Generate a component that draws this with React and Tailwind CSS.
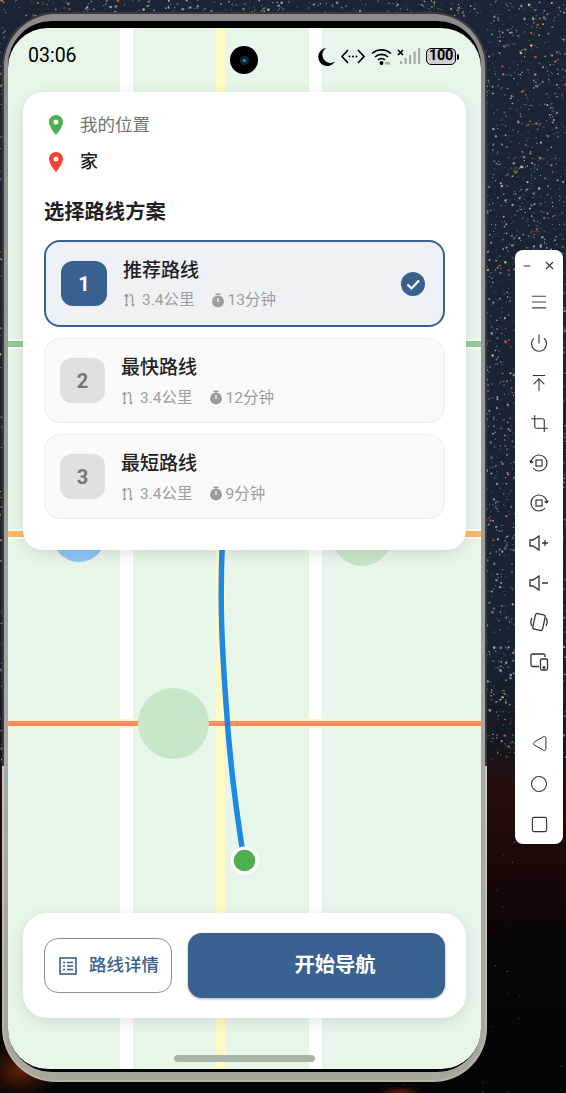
import React from 'react';
import {
  Minus, X, Menu, Power, ArrowUpToLine, Crop, Triangle, Circle, Square,
} from 'lucide-react';

const fontStack = { fontFamily: 'Roboto, "Noto Sans CJK SC", sans-serif' };

// starfield behind the phone, seeded so each run draws the same picture
function makeStars() {
  let seed = 1234;
  const rnd = () => {
    seed = (seed * 16807) % 2147483647;
    return seed / 2147483647;
  };
  const stars = [];
  for (let i = 0; i < 14000; i++) {
    const x = rnd() * 566;
    const y = rnd() * 760;
    const t = rnd();
    const r = 0.45 + rnd() * rnd() * 1.1;
    const o = 0.4 + rnd() * 0.6;
    // the phone and the toolbar cover these anyway
    if (x > 6 && x < 484 && y > 16) continue;
    if (x > 516 && x < 562 && y > 251) continue;
    const fill = t < 0.1 ? '#e0633a' : t < 0.45 ? '#d4c596' : t < 0.75 ? '#9fb2b5' : '#6b86a0';
    stars.push({ x, y, r, fill, o });
  }
  for (let i = 0; i < 120; i++) {
    const x = rnd() * 566;
    const y = 770 + rnd() * 323;
    stars.push({ x, y, r: 0.3 + rnd() * 0.4, fill: '#7d7f90', o: 0.35 + rnd() * 0.5 });
  }
  return stars;
}

const stars = makeStars();

function Backdrop() {
  return (
    <svg className="absolute inset-0" width="566" height="1093" viewBox="0 0 566 1093">
      <defs>
        <linearGradient id="sky" x1="0" y1="0" x2="0" y2="1">
          <stop offset="0" stopColor="#1b2535" />
          <stop offset="0.6" stopColor="#182232" />
          <stop offset="0.68" stopColor="#141820" />
          <stop offset="0.72" stopColor="#260e0b" />
          <stop offset="0.8" stopColor="#1a0807" />
          <stop offset="0.86" stopColor="#080505" />
          <stop offset="1" stopColor="#050505" />
        </linearGradient>
        <radialGradient id="glow">
          <stop offset="0" stopColor="#a83a0f" stopOpacity="0.55" />
          <stop offset="1" stopColor="#6e1c0c" stopOpacity="0" />
        </radialGradient>
      </defs>
      <rect width="566" height="1093" fill="url(#sky)" />
      <ellipse cx="20" cy="1070" rx="40" ry="30" fill="url(#glow)" />
      <ellipse cx="400" cy="1092" rx="24" ry="6" fill="url(#glow)" />
      {stars.map((s, i) => (
        <circle key={i} cx={s.x} cy={s.y} r={s.r} fill={s.fill} opacity={s.o} />
      ))}
    </svg>
  );
}

function MapLayer() {
  return (
    <svg className="absolute inset-0" width="473" height="1041" viewBox="8 28 473 1041">
      <rect x="8" y="28" width="473" height="1041" fill="#e8f5e9" />
      <rect x="120" y="28" width="13" height="1041" fill="#fff" />
      <rect x="309" y="28" width="13" height="1041" fill="#fff" />
      <rect x="216" y="28" width="9" height="1041" fill="#fff9c4" />
      {/* cross streets run on top of the vertical roads */}
      <rect x="8" y="339" width="473" height="10" fill="#fff" />
      <rect x="8" y="341" width="473" height="6" fill="#8fcd93" />
      <rect x="8" y="529" width="473" height="10" fill="#fff" />
      <rect x="8" y="531" width="473" height="6" fill="#ffb866" />
      <rect x="8" y="719" width="473" height="9" fill="#fff8c4" />
      <rect x="8" y="721" width="473" height="5" fill="#ff8a65" />
      <circle cx="79" cy="535" r="27" fill="#90c5f6" />
      <circle cx="362" cy="536" r="30" fill="#c8e6c9" />
      <circle cx="173.5" cy="723.5" r="35.5" fill="#c8e6c9" />
      <path d="M244 860 C 236 810, 230 765, 226.500 710 C 222 650, 219.500 600, 222.500 540" fill="none" stroke="#1e88e5" strokeWidth="5.500" />
      <circle cx="244.500" cy="860.500" r="14" fill="#fff" />
      <circle cx="244.500" cy="860.500" r="10.700" fill="#4caf50" />
    </svg>
  );
}

function StatusBar() {
  return (
    <div className="absolute left-0 right-0 top-0 h-[56px] text-black">
      <span className="absolute left-[20px] top-[16px] text-[19.5px] font-normal leading-[24px]">03:06</span>
      <div className="absolute left-[222px] top-[18px] flex h-[28px] w-[28px] items-center justify-center rounded-full bg-black">
        <div className="flex h-[9px] w-[9px] items-center justify-center rounded-full bg-[#10283c]">
          <div className="h-[3px] w-[3px] rounded-full bg-[#3f88b8]" />
        </div>
      </div>
      <div className="absolute left-[310px] top-[17px]">
        <svg width="110" height="24" viewBox="0 0 110 24">
          {/* moon */}
          <path d="M8 3 A9 9 0 1 0 17 16.500 A8 8 0 0 1 8 3Z" fill="#000" />
          {/* developer mode */}
          <path d="M30 5 L24 11.500 L30 18 M40 5 L46 11.500 L40 18" fill="none" stroke="#000" strokeWidth="1.700" />
          <circle cx="31.500" cy="11.500" r="1" /><circle cx="35" cy="11.500" r="1" /><circle cx="38.500" cy="11.500" r="1" />
          {/* wifi */}
          <path d="M54 8.500 A14 14 0 0 1 73 8.500 M57 12 A9.500 9.500 0 0 1 70 12 M60 15 A5 5 0 0 1 67 15" fill="none" stroke="#000" strokeWidth="1.700" />
          <circle cx="63.500" cy="18" r="2" />
          <rect x="67" y="17" width="5" height="2.500" rx="1" fill="#aaa" />
          {/* signal */}
          <path d="M80 5 L85 10 M85 5 L80 10" stroke="#000" strokeWidth="1.700" />
          <rect x="82" y="16" width="2.200" height="3" fill="#aaa" />
          <rect x="86.500" y="13" width="2.200" height="6" fill="#aaa" />
          <rect x="91" y="10" width="2.200" height="9" fill="#aaa" />
          <rect x="95.500" y="6.500" width="2.200" height="12.500" fill="#aaa" />
          <rect x="100" y="3" width="2.200" height="16" fill="#aaa" />
        </svg>
      </div>
      <div className="absolute left-[418px] top-[20px] flex items-center">
        <div className="flex h-[17px] w-[30px] items-center justify-center rounded-[5px] border-[1.5px] border-black bg-[#cfcfcf] text-[14.5px] font-bold leading-none tracking-[-0.3px]">100</div>
        <div className="ml-[1px] h-[6px] w-[2px] rounded-r-sm bg-black" />
      </div>
    </div>
  );
}

function Pin({ color }) {
  return (
    <svg width="24" height="24" viewBox="0 0 24 24">
      <path fill={color} d="M12 2C8.130 2 5 5.130 5 9c0 5.250 7 13 7 13s7-7.750 7-13c0-3.870-3.130-7-7-7zm0 9.500a2.500 2.500 0 1 1 0-5 2.500 2.500 0 0 1 0 5z" />
    </svg>
  );
}

function RouteIcon() {
  return (
    <svg width="13" height="14" viewBox="0 0 13 14" fill="none" stroke="#9e9e9e" strokeWidth="1.500">
      <path d="M3.500 1.500 V10 M1.500 3.500 L3.500 1.500 L5.500 3.500" />
      <path d="M6.500 1.500 C9.500 1.500 9.500 3 9.500 5 V10" />
      <circle cx="10" cy="11.700" r="1.500" fill="#9e9e9e" stroke="none" />
      <circle cx="3.500" cy="11.700" r="1.500" fill="#9e9e9e" stroke="none" />
    </svg>
  );
}

function TimerIcon() {
  return (
    <svg width="14" height="15" viewBox="0 0 14 15">
      <rect x="4.500" y="0.500" width="5" height="1.600" fill="#9e9e9e" />
      <circle cx="7" cy="8.500" r="6" fill="#9e9e9e" />
      <rect x="6.400" y="5" width="1.200" height="4" fill="#fff" />
    </svg>
  );
}

function RouteCard({ num, name, km, mins, active }) {
  return (
    <div
      className={
        active
          ? 'flex h-[87px] items-center rounded-[16px] border-2 border-[#38618f] bg-[#eef2f6] pl-[15px] pr-[18px]'
          : 'flex h-[85px] items-center rounded-[16px] border border-[#eeeeee] bg-[#fafafa] pl-[15px] pr-[18px]'
      }
    >
      <div
        className={
          active
            ? 'flex h-[45px] w-[46px] items-center justify-center rounded-[12px] bg-[#38618f] text-[20px] font-bold text-white'
            : 'flex h-[45px] w-[45px] items-center justify-center rounded-[12px] bg-[#e0e0e0] text-[20px] font-bold text-[#757575]'
        }
      >
        {num}
      </div>
      <div className="ml-[16px] flex-1 pt-[2px]">
        <div className="text-[19px] font-medium leading-[24px] text-[#212121]">{name}</div>
        <div className={`${active ? 'mt-[7px]' : 'mt-[8px]'} flex items-center text-[15.5px] leading-[20px] text-[#9e9e9e]`}>
          <RouteIcon />
          <span className="ml-[6px]">{km}</span>
          <span className="ml-[16px] flex items-center">
            <TimerIcon />
            <span className="ml-[3px]">{mins}</span>
          </span>
        </div>
      </div>
      {active && (
        <svg width="24" height="24" viewBox="0 0 24 24">
          <circle cx="12" cy="12" r="12" fill="#38618f" />
          <path d="M6.500 12.500 L10.500 16.500 L18 8.500" fill="none" stroke="#fff" strokeWidth="2.200" />
        </svg>
      )}
    </div>
  );
}

function TopCard() {
  return (
    <div className="absolute left-[15px] top-[64px] h-[458px] w-[443px] rounded-[20px] bg-white px-[21px] pt-[21px] shadow-[0_4px_16px_rgba(0,0,0,0.1)]">
      <div className="flex h-[24px] items-center">
        <Pin color="#4caf50" />
        <span className="ml-[12px] text-[17.5px] leading-[24px] text-[#757575]">我的位置</span>
      </div>
      <div className="mt-[13px] flex h-[24px] items-center">
        <Pin color="#f44336" />
        <span className="ml-[12px] text-[18px] font-medium leading-[24px] text-[#212121]">家</span>
      </div>
      <div className="mt-[24px] text-[20.3px] font-bold leading-[28px] text-[#212121]">选择路线方案</div>
      <div className="mt-[14px] flex flex-col gap-[11px]">
        <RouteCard num="1" name="推荐路线" km="3.4公里" mins="13分钟" active />
        <RouteCard num="2" name="最快路线" km="3.4公里" mins="12分钟" />
        <RouteCard num="3" name="最短路线" km="3.4公里" mins="9分钟" />
      </div>
    </div>
  );
}

function BottomCard() {
  return (
    <div className="absolute left-[15px] top-[885px] flex h-[105px] w-[443px] items-center gap-[16px] rounded-[24px] bg-white px-[21px] shadow-[0_4px_16px_rgba(0,0,0,0.1)]">
      <div className="flex h-[55px] w-[128px] items-center rounded-[14px] border border-[#8e8e98] pl-[14px]">
        <svg width="18" height="18" viewBox="0 0 18 18" fill="none" stroke="#38618f" strokeWidth="1.600">
          <rect x="1" y="1" width="16" height="16" />
          <path d="M4 5.500 H6 M8 5.500 H14 M4 9 H6 M8 9 H14 M4 12.500 H6 M8 12.500 H14" />
        </svg>
        <span className="ml-[12px] text-[17.5px] font-medium text-[#38618f]">路线详情</span>
      </div>
      <div className="flex h-[65px] flex-1 items-center justify-center rounded-[14px] bg-[#38618f] pl-[37px] text-[20.3px] font-bold text-white shadow-[0_1px_3px_rgba(0,0,0,0.3)]">
        开始导航
      </div>
    </div>
  );
}

function SideToolbar() {
  const cls = 'text-[#333]';
  return (
    <div className="absolute left-[515px] top-[250px] h-[594px] w-[48px] rounded-[8px] bg-white">
      <div className="absolute left-0 right-0 top-[9px] flex items-center justify-between px-[7px]">
        <Minus size={10} strokeWidth={2.6} className={cls} />
        <X size={13} className={cls} />
      </div>
      <div className="absolute left-0 right-0 top-[42px] flex flex-col items-center">
        <div className="flex h-[20px] items-center"><Menu size={20} strokeWidth={1.3} className="text-[#444]" /></div>
        <div className="mt-[21px] flex h-[20px] items-center"><Power size={20} strokeWidth={1.3} className={cls} /></div>
        <div className="mt-[20px] flex h-[20px] items-center"><ArrowUpToLine size={20} strokeWidth={1.3} className={cls} /></div>
        <div className="mt-[20px] flex h-[20px] items-center"><Crop size={19} strokeWidth={1.4} className={cls} /></div>
        <div className="mt-[20px] flex h-[20px] items-center">
          <svg width="20" height="20" viewBox="0 0 20 20" fill="none" stroke="#333" strokeWidth="1.200">
            <rect x="7" y="7" width="6" height="6" />
            <path d="M2 10 A8 8 0 1 1 10 18 A8 8 0 0 1 4 15 M2 10 L0.800 7.500 M2 10 L4.500 8.500" />
          </svg>
        </div>
        <div className="mt-[20px] flex h-[20px] items-center">
          <svg width="20" height="20" viewBox="0 0 20 20" fill="none" stroke="#333" strokeWidth="1.200">
            <rect x="7" y="7" width="6" height="6" />
            <path d="M18 10 A8 8 0 1 0 10 18 A8 8 0 0 0 16 15 M18 10 L19.200 7.500 M18 10 L15.500 8.500" />
          </svg>
        </div>
        <div className="mt-[20px] flex h-[20px] items-center">
          <svg width="20" height="20" viewBox="0 0 20 20" fill="none" stroke="#333" strokeWidth="1.300">
            <path d="M1 7 H4 L10 3 V17 L4 13 H1Z M13 10 H19 M16 7 V13" />
          </svg>
        </div>
        <div className="mt-[20px] flex h-[20px] items-center">
          <svg width="20" height="20" viewBox="0 0 20 20" fill="none" stroke="#333" strokeWidth="1.300">
            <path d="M1 7 H4 L10 3 V17 L4 13 H1Z M13 10 H19" />
          </svg>
        </div>
        <div className="mt-[19px] flex h-[20px] items-center">
          <svg width="20" height="20" viewBox="0 0 20 20" fill="none" stroke="#333" strokeWidth="1.300">
            <rect x="5" y="2" width="10" height="16" rx="2" transform="rotate(12 10 10)" />
            <path d="M3 6 C1.500 8 1.500 12 3 14 M17 6 C18.500 8 18.500 12 17 14" />
          </svg>
        </div>
        <div className="mt-[20px] flex h-[20px] items-center">
          <svg width="20" height="20" viewBox="0 0 20 20" fill="none" stroke="#333" strokeWidth="1.300">
            <path d="M16 5 V3.500 A1.500 1.500 0 0 0 14.500 2 H3.500 A1.500 1.500 0 0 0 2 3.500 V13 A1.500 1.500 0 0 0 3.500 14.500 H10" />
            <rect x="11.500" y="7" width="7" height="11" rx="1.500" />
            <circle cx="15" cy="15.500" r="0.800" fill="#333" />
          </svg>
        </div>
        <div className="mt-[61px] flex h-[20px] items-center">
          <Triangle size={17} strokeWidth={1.4} className="-rotate-90 text-[#333]" />
        </div>
        <div className="mt-[21px] flex h-[20px] items-center"><Circle size={18} strokeWidth={1.4} className={cls} /></div>
        <div className="mt-[20px] flex h-[20px] items-center"><Square size={19} strokeWidth={1.4} className={cls} /></div>
      </div>
    </div>
  );
}

export default function App() {
  return (
    <div className="relative h-[1093px] w-[566px] overflow-hidden" style={fontStack}>
      <Backdrop />
      {/* phone body: dark rim up top, light rim where the reflection starts */}
      <div className="absolute left-[2px] top-[12px] h-[1070px] w-[485px] rounded-[54px] bg-[linear-gradient(180deg,#3a3a3a_0%,#3a3a3a_70.500%,#cfc8bc_70.500%,#b8b2a6_100%)] p-[2px]">
        <div className="h-full w-full rounded-[52px] bg-[linear-gradient(180deg,#8c8c8c_0%,#a8a8a8_70%,#a9a59c_100%)] px-[4px] pb-[8px] pt-[7px]">
          <div className="h-full w-full rounded-[44px] bg-black pb-[3px] pt-[7px]">
            <div className="relative h-[1041px] w-[473px] overflow-hidden rounded-[40px]">
              <MapLayer />
              <StatusBar />
              <TopCard />
              <BottomCard />
              <div className="absolute left-[166px] top-[1027px] h-[7px] w-[141px] rounded-full bg-[#a9b5a9]" />
            </div>
          </div>
        </div>
      </div>
      <SideToolbar />
    </div>
  );
}
